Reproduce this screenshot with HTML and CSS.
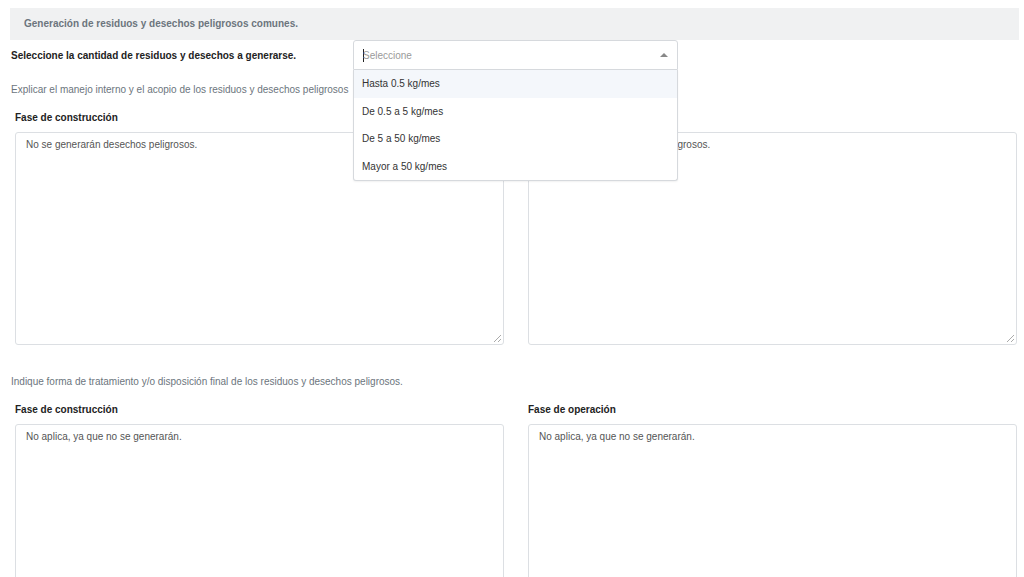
FILE: index.html
```html
<!DOCTYPE html>
<html lang="es">
<head>
<meta charset="utf-8">
<link rel="stylesheet" href="styles.css">
</head>
<body>
<div class="page">
  <div class="section-head">Generación de residuos y desechos peligrosos comunes.</div>

  <div class="select-row">
    <div class="select-label">Seleccione la cantidad de residuos y desechos a generarse.</div>
    <div class="select-wrap">
      <div class="select-box">
        <span class="caret"></span><span class="placeholder">Seleccione</span>
        <span class="arrow"></span>
      </div>
      <ul class="menu">
        <li class="opt active">Hasta 0.5 kg/mes</li>
        <li class="opt">De 0.5 a 5 kg/mes</li>
        <li class="opt">De 5 a 50 kg/mes</li>
        <li class="opt">Mayor a 50 kg/mes</li>
      </ul>
    </div>
  </div>

  <p class="hint first">Explicar el manejo interno y el acopio de los residuos y desechos peligrosos</p>
  <div class="pair">
    <div class="field">
      <div class="field-label">Fase de construcción</div>
      <div class="area">No se generarán desechos peligrosos.<span class="grip"></span></div>
    </div>
    <div class="field">
      <div class="field-label">Fase de operación</div>
      <div class="area">No se generarán desechos peligrosos.<span class="grip"></span></div>
    </div>
  </div>

  <p class="hint second">Indique forma de tratamiento y/o disposición final de los residuos y desechos peligrosos.</p>
  <div class="pair">
    <div class="field">
      <div class="field-label">Fase de construcción</div>
      <div class="area">No aplica, ya que no se generarán.<span class="grip"></span></div>
    </div>
    <div class="field">
      <div class="field-label">Fase de operación</div>
      <div class="area">No aplica, ya que no se generarán.<span class="grip"></span></div>
    </div>
  </div>
</div>
</body>
</html>
```

FILE: styles.css
```css
html, body {
  margin: 0;
  padding: 0;
  background: #fff;
  overflow: hidden;
}
body {
  font-family: "Liberation Sans", Arial, sans-serif;
  font-size: 10px;
  color: #333;
}
.page {
  padding: 8px 5px 0 10px;
}
.section-head {
  background: #f0f1f2;
  height: 32px;
  line-height: 31px;
  padding-left: 14px;
  color: #6c757d;
  font-weight: bold;
}
.select-row {
  display: flex;
  align-items: center;
  height: 30px;
}
.select-label {
  width: 342px;
  padding-left: 1px;
  font-weight: bold;
  color: #222;
}
.select-wrap {
  position: relative;
  width: 325px;
  height: 30px;
}
.select-box {
  box-sizing: border-box;
  height: 30px;
  border: 1px solid #d6d9dd;
  border-radius: 3px 3px 0 0;
  display: flex;
  align-items: center;
  padding-left: 9px;
  position: relative;
  background: #fff;
}
.caret {
  display: inline-block;
  width: 1px;
  height: 13px;
  background: #222;
  margin-right: -1px;
}
.placeholder {
  color: #9a9a9a;
}
.arrow {
  position: absolute;
  right: 9px;
  top: 12px;
  width: 0;
  height: 0;
  border-left: 4px solid transparent;
  border-right: 4px solid transparent;
  border-bottom: 4px solid #888;
}
.menu {
  position: absolute;
  top: 30px;
  left: 0;
  width: 325px;
  box-sizing: border-box;
  margin: 0;
  padding: 0;
  list-style: none;
  background: #fff;
  border: 1px solid #d6d9dd;
  border-top: none;
  border-radius: 0 0 3px 3px;
  box-shadow: 0 1px 2px rgba(0,0,0,0.06);
  z-index: 10;
}
.opt {
  height: 27.5px;
  line-height: 27px;
  padding-left: 8px;
  color: #333;
}
.opt.active {
  background: #f4f7fb;
}
.hint {
  margin: 0;
  color: #6c757d;
  padding-left: 1px;
  line-height: 12px;
}
.hint.first {
  margin-top: 14px;
}
.hint.second {
  margin-top: 31px;
}
.pair {
  display: grid;
  grid-template-columns: 489px 489px;
  column-gap: 24px;
  padding-left: 5px;
}
.field-label {
  font-weight: bold;
  color: #222;
  margin-top: 16px;
  height: 20px;
  line-height: 12px;
}
.area {
  position: relative;
  box-sizing: border-box;
  height: 213px;
  border: 1px solid #dcdfe3;
  border-radius: 3px;
  padding: 6px 10px;
  color: #555;
  line-height: 12px;
}
.grip {
  position: absolute;
  right: 2px;
  bottom: 2px;
  width: 7px;
  height: 7px;
  background: linear-gradient(135deg, transparent 45%, #aaa 45%, #aaa 55%, transparent 55%, transparent 72%, #aaa 72%, #aaa 82%, transparent 82%);
}
```
